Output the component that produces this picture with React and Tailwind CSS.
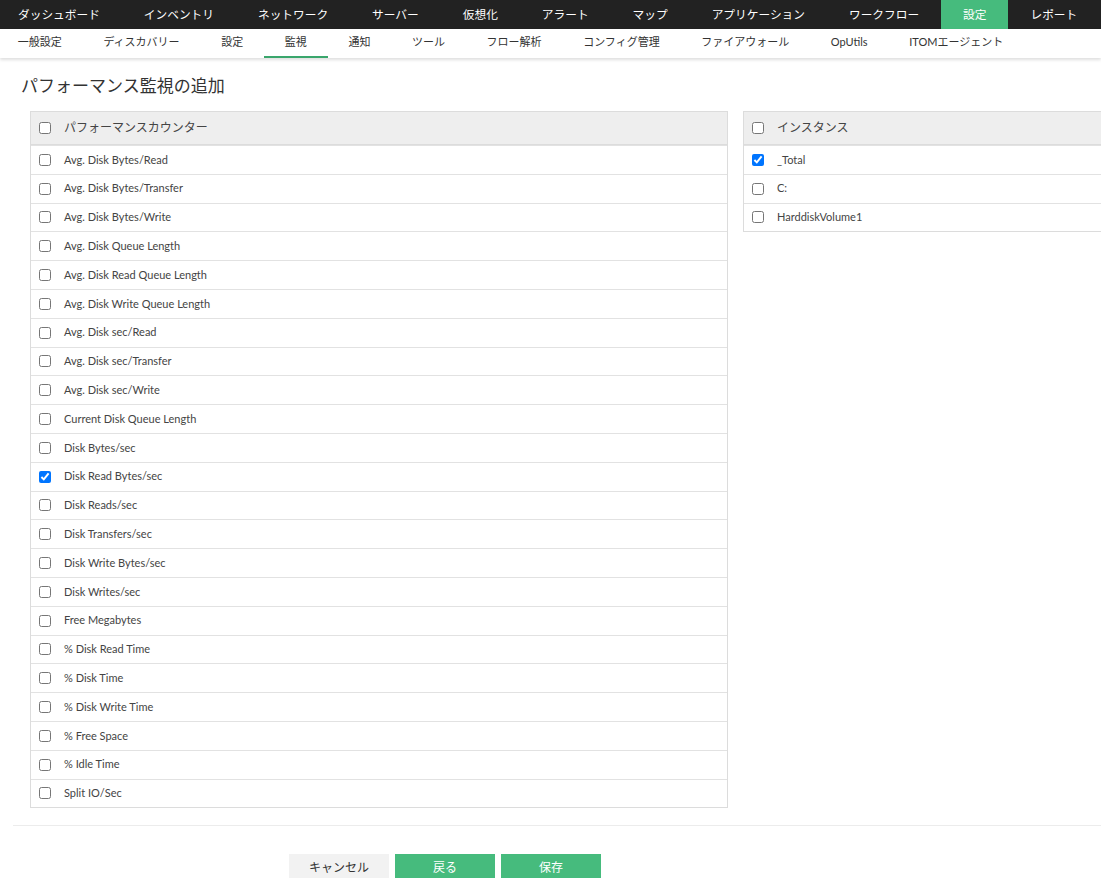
import React from "react";

const FONT = { fontFamily: "Lato, 'Noto Sans CJK JP', 'Noto Sans', sans-serif" };

const topNav = [
    "ダッシュボード",
    "インベントリ",
    "ネットワーク",
    "サーバー",
    "仮想化",
    "アラート",
    "マップ",
    "アプリケーション",
    "ワークフロー",
    "設定",
    "レポート",
];

const subNav = [
    "一般設定",
    "ディスカバリー",
    "設定",
    "監視",
    "通知",
    "ツール",
    "フロー解析",
    "コンフィグ管理",
    "ファイアウォール",
    "OpUtils",
    "ITOMエージェント",
];

const counters = [
    "Avg. Disk Bytes/Read",
    "Avg. Disk Bytes/Transfer",
    "Avg. Disk Bytes/Write",
    "Avg. Disk Queue Length",
    "Avg. Disk Read Queue Length",
    "Avg. Disk Write Queue Length",
    "Avg. Disk sec/Read",
    "Avg. Disk sec/Transfer",
    "Avg. Disk sec/Write",
    "Current Disk Queue Length",
    "Disk Bytes/sec",
    "Disk Read Bytes/sec",
    "Disk Reads/sec",
    "Disk Transfers/sec",
    "Disk Write Bytes/sec",
    "Disk Writes/sec",
    "Free Megabytes",
    "% Disk Read Time",
    "% Disk Time",
    "% Disk Write Time",
    "% Free Space",
    "% Idle Time",
    "Split IO/Sec",
];

const instances = ["_Total", "C:", "HarddiskVolume1"];

// checkbox + label row
function Row({ label, checked }) {
    return (
        <label className="flex items-center h-[28.8px] border-t border-[#e2e2e2] pl-[8px] first:border-t-0">
            <input
                type="checkbox"
                defaultChecked={checked}
                className="m-0 w-[12px] h-[12px] accent-[#0075ff]"
            />
            <span className="ml-[13px] text-[11px] text-[#444]">{label}</span>
        </label>
    );
}

function Panel({ title, items, checkedSet, width }) {
    return (
        <div className={`border border-[#dcdcdc] bg-white shrink-0 ${width}`}>
            {/* HEADER */}
            <label className="flex items-center h-[33px] bg-[#eeeeee] border-b border-[#dcdcdc] pl-[8px]">
                <input type="checkbox" className="m-0 w-[12px] h-[12px]" />
                <span className="ml-[13px] text-[12px] text-[#444]">{title}</span>
            </label>

            {items.map((it) => (
                <Row key={it} label={it} checked={checkedSet.includes(it)} />
            ))}
        </div>
    );
}

export default function App() {
    return (
        <div className="w-[1101px] h-[878px] overflow-hidden bg-white" style={FONT}>
            {/* ================= TOP NAV ================= */}
            <nav className="h-[29px] bg-[#222222] flex">
                <div className="flex ml-[-4px]">
                    {topNav.map((item, i) => (
                        <div
                            key={item + i}
                            className={`h-full flex items-center px-[22px] text-[11.7px] text-white ${
                                i === 9 ? "bg-[#46bb7d]" : ""
                            }`}
                        >
                            {item}
                        </div>
                    ))}
                </div>
            </nav>

            {/* ================= SUB NAV ================= */}
            <div className="h-[29px] bg-white flex shadow-[0_2px_3px_rgba(0,0,0,0.13)] relative z-10">
                <div className="flex ml-[-3px]">
                    {subNav.map((item, i) => (
                        <div
                            key={item + i}
                            className={`h-full flex items-center px-[20.8px] text-[11px] text-[#333] border-b-2 ${
                                i === 3 ? "border-[#3aa66c]" : "border-transparent"
                            }`}
                        >
                            {item}
                        </div>
                    ))}
                </div>
            </div>

            {/* TITLE */}
            <h1 className="ml-[21px] mt-[16px] h-[24px] leading-[24px] text-[17px] text-[#333]">
                パフォーマンス監視の追加
            </h1>

            {/* PANELS */}
            <div className="flex items-start gap-[15px] ml-[30px] mt-[13px]">
                <Panel
                    title="パフォーマンスカウンター"
                    items={counters}
                    checkedSet={["Disk Read Bytes/sec"]}
                    width="w-[698px]"
                />
                <Panel
                    title="インスタンス"
                    items={instances}
                    checkedSet={["_Total"]}
                    width="w-[500px]"
                />
            </div>

            {/* SEPARATOR */}
            <div className="ml-[13px] mt-[17px] border-t border-[#ececec]"></div>

            {/* BUTTONS */}
            <div className="flex gap-[6px] ml-[289px] mt-[28px]">
                <button className="w-[100px] h-[28px] bg-[#f2f2f2] text-[12px] text-[#333]">
                    キャンセル
                </button>
                <button className="w-[100px] h-[28px] bg-[#46bb7d] text-[12px] text-white">
                    戻る
                </button>
                <button className="w-[100px] h-[28px] bg-[#46bb7d] text-[12px] text-white">
                    保存
                </button>
            </div>
        </div>
    );
}
